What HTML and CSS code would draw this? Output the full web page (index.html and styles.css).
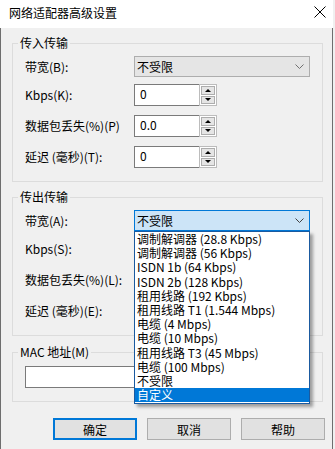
FILE: index.html
```html
<!DOCTYPE html>
<html lang="zh-CN">
<head>
  <meta charset="UTF-8" />
  <title>网络适配器高级设置</title>
  <link rel="stylesheet" href="styles.css">
</head>
<body>

<div class="window">
  <div class="titlebar">
    <span class="title">网络适配器高级设置</span>
    <svg class="close" width="12" height="12" viewBox="0 0 12 12">
      <path d="M0.5 0.5 L11.5 11.5 M11.5 0.5 L0.5 11.5" stroke="#000" stroke-width="1" fill="none"/>
    </svg>
  </div>

  <div class="content">
    <fieldset class="group">
      <legend>传入传输</legend>
      <div class="row row-select">
        <label>带宽(B):</label>
        <div class="combo">
          <span>不受限</span>
          <svg class="chev" width="9" height="5" viewBox="0 0 9 5"><path d="M0.5 0.5 L4.5 4.5 L8.5 0.5" stroke="#707070" fill="none"/></svg>
        </div>
      </div>
      <div class="row">
        <label>Kbps(K):</label>
        <div class="spin"><div class="spin-text">0</div><div class="spin-btns"><div class="arr up"></div><div class="arr down"></div></div></div>
      </div>
      <div class="row">
        <label>数据包丢失(%)(P)</label>
        <div class="spin"><div class="spin-text">0.0</div><div class="spin-btns"><div class="arr up"></div><div class="arr down"></div></div></div>
      </div>
      <div class="row">
        <label>延迟 (毫秒)(T):</label>
        <div class="spin"><div class="spin-text">0</div><div class="spin-btns"><div class="arr up"></div><div class="arr down"></div></div></div>
      </div>
    </fieldset>

    <fieldset class="group">
      <legend>传出传输</legend>
      <div class="row row-select">
        <label>带宽(A):</label>
        <div class="combo open">
          <span>不受限</span>
          <svg class="chev" width="9" height="5" viewBox="0 0 9 5"><path d="M0.5 0.5 L4.5 4.5 L8.5 0.5" stroke="#404040" fill="none"/></svg>
          <ul class="droplist">
            <li>调制解调器 (28.8 Kbps)</li>
            <li>调制解调器 (56 Kbps)</li>
            <li>ISDN 1b (64 Kbps)</li>
            <li>ISDN 2b (128 Kbps)</li>
            <li>租用线路 (192 Kbps)</li>
            <li>租用线路 T1 (1.544 Mbps)</li>
            <li>电缆 (4 Mbps)</li>
            <li>电缆 (10 Mbps)</li>
            <li>租用线路 T3 (45 Mbps)</li>
            <li>电缆 (100 Mbps)</li>
            <li>不受限</li>
            <li class="sel">自定义</li>
          </ul>
        </div>
      </div>
      <div class="row">
        <label>Kbps(S):</label>
      </div>
      <div class="row">
        <label>数据包丢失(%)(L):</label>
      </div>
      <div class="row">
        <label>延迟 (毫秒)(E):</label>
      </div>
    </fieldset>

    <fieldset class="group mac">
      <legend>MAC 地址(M)</legend>
      <div class="mac-input"></div>
    </fieldset>

    <div class="buttons">
      <button class="btn default">确定</button>
      <button class="btn">取消</button>
      <button class="btn">帮助</button>
    </div>
  </div>
</div>

</body>
</html>
```

FILE: styles.css
```css
body {
  margin: 0;
  padding: 0;
  background: #f0f0f0;
  font-family: "Noto Sans CJK SC", "Microsoft YaHei", sans-serif;
  font-size: 12px;
  color: #000;
}
.window {
  width: 335px;
  height: 449px;
  overflow: hidden;
}
.titlebar {
  height: 28px;
  width: 333px;
  background: #fff;
  display: flex;
  align-items: center;
  justify-content: space-between;
  padding: 0 9px;
  box-sizing: border-box;
}
.title {
  font-size: 12px;
  line-height: 14px;
  margin-top: -2px;
}
.close {
  margin-right: -2px;
  margin-top: -4px;
}
.content {
  height: 421px;
  width: 333px;
  box-sizing: border-box;
  border-left: 1px solid #6e6e6e;
  border-right: 1px solid #6e6e6e;
  padding-top: 8px;
}
.group {
  margin: 0 9px 8px 11px;
  padding: 6px 12px 13px 12px;
  border: 1px solid #dcdcdc;
  min-width: 0;
}
.group legend {
  padding: 0 2px;
  margin-left: -7px;
  line-height: 14px;
}
.row {
  display: flex;
  align-items: center;
  height: 22px;
  margin-top: 9px;
}
.row-select {
  height: 21px;
  margin-top: 0;
  margin-bottom: -2px;
}
.row label {
  width: 109px;
  flex: none;
  line-height: 14px;
}
.combo {
  position: relative;
  width: 176px;
  height: 21px;
  box-sizing: border-box;
  background: #e5e5e5;
  border: 1px solid #adadad;
  display: flex;
  align-items: center;
  justify-content: space-between;
  padding: 0 5px 0 2px;
}
.combo span {
  line-height: 14px;
}
.combo.open {
  background: #cce4f7;
  border-color: #0078d7;
}
.droplist {
  position: absolute;
  left: -1px;
  top: 20px;
  width: 176px;
  box-sizing: border-box;
  margin: 0;
  padding: 0 0 1px 0;
  list-style: none;
  background: #fff;
  border: 1px solid #1a5aa0;
  box-shadow: 3px 3px 3px rgba(0, 0, 0, 0.35);
  z-index: 2;
}
.droplist li {
  line-height: 14.2px;
  padding-left: 2px;
  white-space: nowrap;
}
.droplist li.sel {
  background: #0078d7;
  color: #fff;
}
.spin {
  display: flex;
  height: 22px;
}
.spin-text {
  width: 65px;
  box-sizing: border-box;
  background: #fff;
  border: 1px solid #7a7a7a;
  border-right: none;
  padding: 2px 0 0 5px;
  line-height: 14px;
}
.spin-btns {
  width: 18px;
  box-sizing: border-box;
  border: 1px solid #bcbcbc;
  background: #fff;
  padding: 1px;
  display: flex;
  flex-direction: column;
  gap: 1px;
}
.arr {
  flex: 1;
  background: #e5e5e5;
  border: 1px solid #adadad;
  display: flex;
  align-items: center;
  justify-content: center;
}
.arr::after {
  content: "";
  width: 0;
  height: 0;
  border-left: 3px solid transparent;
  border-right: 3px solid transparent;
}
.arr.up::after {
  border-bottom: 3px solid #000;
}
.arr.down::after {
  border-top: 3px solid #000;
}
.mac {
  margin-top: 9px;
  padding-top: 7px;
}
.mac-input {
  height: 22px;
  width: 285px;
  box-sizing: border-box;
  background: #fff;
  border: 1px solid #7a7a7a;
}
.buttons {
  display: flex;
  justify-content: flex-end;
  gap: 10px;
  padding-right: 7px;
  margin-top: 16px;
}
.btn {
  width: 84px;
  height: 22px;
  box-sizing: border-box;
  background: #e1e1e1;
  border: 1px solid #adadad;
  font-family: inherit;
  font-size: 12px;
  padding: 0;
}
.btn.default {
  border: 2px solid #0078d7;
}
```
